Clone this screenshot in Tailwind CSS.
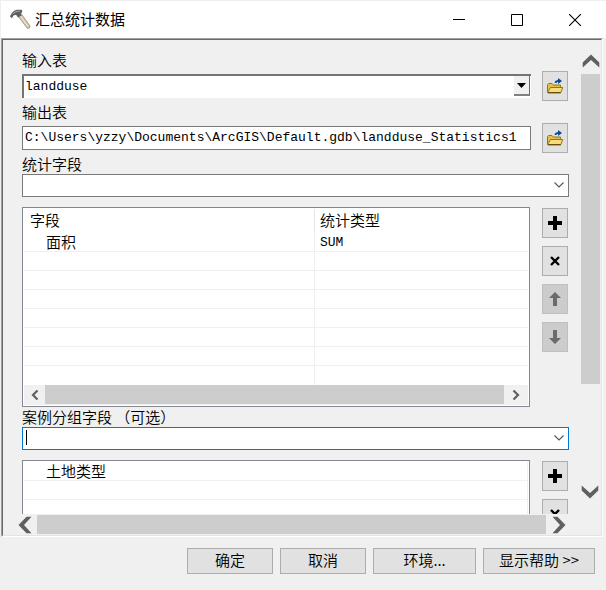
<!DOCTYPE html>
<html lang="zh-CN">
<head>
<meta charset="utf-8">
<meta name="viewport" content="width=device-width, initial-scale=1">
<title>汇总统计数据</title>
<script src="https://cdn.jsdelivr.net/npm/@tailwindcss/browser@4"></script>
</head>
<body class="h-screen bg-[#f0f0f0] text-black text-[15px] leading-4 font-[350] font-['Noto_Sans_CJK_SC',sans-serif]">
<svg class="hidden" aria-hidden="true">
  <defs>
    <symbol id="folder" viewBox="0 0 18 16">
      <path d="M1.500 14V6.500L2.500 5.500H6L7.500 7H14.500V9.500" fill="#e0bf4c" stroke="#94751a"/>
      <path d="M1.500 14.500L4.500 9.500H16.800L14.800 14.500Z" fill="#f7dc7c" stroke="#94751a" stroke-linejoin="round"/>
      <path d="M2 14.700H14.800" stroke="#6b4e08" stroke-width="1.4"/>
      <path d="M9.500 5C9.500 3.300 10.500 2.900 13 2.900" fill="none" stroke="#0b4a8c" stroke-width="1.8"/>
      <path d="M12 0L16 2.900L12 5.900Z" fill="#0b4a8c"/>
    </symbol>
    <symbol id="plus" viewBox="0 0 14 14"><path d="M5 0H9V5H14V9H9V14H5V9H0V5H5Z"/></symbol>
    <symbol id="cross" viewBox="0 0 10 10"><path d="M1 1L9 9M9 1L1 9" fill="none" stroke="#000" stroke-width="2.4"/></symbol>
    <symbol id="arrow" viewBox="0 0 12 14"><path d="M6 0L12 6H8V14H4V6H0Z" fill="#6b6b6b"/></symbol>
    <symbol id="chev" viewBox="0 0 18 14"><path d="M9 .5L17.300 8.500V13.500L9 6L.7 13.500V8.500Z" fill="#606060"/></symbol>
    <symbol id="drop" viewBox="0 0 10 6"><path d="M.5 .5L5 5L9.500 .5" fill="none" stroke="#555" stroke-width="1.1"/></symbol>
    <symbol id="thin" viewBox="0 0 8 10"><path d="M6.500 .5L2 5L6.500 9.500" fill="none" stroke="#606060" stroke-width="2.2"/></symbol>
  </defs>
</svg>
<div class="flex h-full flex-col border-l border-t border-[#efefef]">
  <header class="flex h-[37px] shrink-0 items-center bg-white pr-0.5 pl-2">
    <svg class="size-[22px]" viewBox="0 0 22 22" aria-hidden="true">
      <path d="M8.500 6.500L12 4.500L21 17Q21.300 19.500 18.500 19.500Z" fill="#d3c6ae" stroke="#8d8069" stroke-width=".7"/>
      <path d="M11.500 7L19 17.500" stroke="#f3ecdc" stroke-width="1"/>
      <path d="M1 7.500Q3 2 8 .8L12.800 .7L13.300 3L11.800 4.500L12.500 6.500L9 8.500L7 5.800L4.500 6.500L3 9.300Z" fill="#5f5f5f"/>
      <path d="M3.500 5Q6 2 11 2" fill="none" stroke="#a8a8a8"/>
    </svg>
    <h1 class="ml-1 flex-1 pb-0.5 font-normal">汇总统计数据</h1>
    <button aria-label="最小化" class="flex h-full w-[58px] items-center justify-center"><svg class="size-3" viewBox="0 0 12 12"><path d="M0 5.500H12" stroke="#000"/></svg></button>
    <button aria-label="最大化" class="flex h-full w-[58px] items-center justify-center"><svg class="size-3" viewBox="0 0 12 12"><path d="M.5 .5H11.500V11.500H.5Z" fill="none" stroke="#000"/></svg></button>
    <button aria-label="关闭" class="flex h-full w-[58px] items-center justify-center"><svg class="size-3" viewBox="0 0 12 12"><path d="M0 0L12 12M12 0L0 12" stroke="#000" stroke-width="1.1"/></svg></button>
  </header>

  <main class="mr-[3px] flex min-h-0 flex-1 border border-t-[#a0a0a0] border-r-white border-b-white border-l-[#a0a0a0]">
    <div class="flex min-w-0 flex-1 border border-t-[#696969] border-r-[#e3e3e3] border-b-[#e3e3e3] border-l-[#696969]">
      <div class="flex min-w-0 flex-1 flex-col">
        <form class="min-h-0 flex-1 overflow-hidden pt-3 pr-3 pl-[19px]">
          <label for="in-table" class="block">输入表</label>
          <div class="mt-1.5 flex h-6 items-center gap-[11px] pr-px">
            <div class="relative h-6 min-w-0 flex-1 border-t-2 border-l-2 border-t-[#747474] border-l-[#747474] bg-white">
              <select id="in-table" class="h-full w-full appearance-none pb-0.5 pl-px text-[13px] font-normal outline-none font-['Liberation_Mono','Noto_Sans_CJK_SC',monospace]"><option>landduse</option></select>
              <span class="pointer-events-none absolute top-0 right-px flex h-5 w-4 items-center justify-center border-r border-b-2 border-r-[#696969] border-b-[#808080] bg-[#f0f0f0]"><svg class="h-[5px] w-[9px]" viewBox="0 0 9 5"><path d="M0 0H9L4.500 5Z"/></svg></span>
            </div>
            <button type="button" aria-label="浏览输入表" class="flex h-[30px] w-[26px] shrink-0 items-center justify-center border border-[#adadad] bg-[#e1e1e1]"><svg class="h-4 w-[18px]"><use href="#folder"/></svg></button>
          </div>
          <label for="out-table" class="mt-1.5 block">输出表</label>
          <div class="mt-1.5 flex h-6 items-center gap-[11px] pr-px">
            <input id="out-table" value="C:\Users\yzzy\Documents\ArcGIS\Default.gdb\landduse_Statistics1" class="h-6 min-w-0 flex-1 border border-[#7a7a7a] bg-white pb-px pl-0.5 text-[13px] font-normal outline-none font-['Liberation_Mono','Noto_Sans_CJK_SC',monospace]">
            <button type="button" aria-label="浏览输出表" class="flex h-[30px] w-[26px] shrink-0 items-center justify-center border border-[#adadad] bg-[#e1e1e1]"><svg class="h-4 w-[18px]"><use href="#folder"/></svg></button>
          </div>
          <label for="stat-field" class="mt-1.5 block">统计字段</label>
          <div class="relative mt-0.5 h-[23px]">
            <select id="stat-field" class="h-full w-full appearance-none border border-[#7a7a7a] bg-white outline-none"><option></option></select>
            <svg class="pointer-events-none absolute top-2 right-[5px] h-[6px] w-[10px]"><use href="#drop"/></svg>
          </div>
          <div class="mt-2.5 flex gap-3 pr-px">
            <div class="min-w-0 flex-1 border border-[#828790] bg-white p-px">
              <table class="w-full table-fixed border-separate border-spacing-0">
                <thead>
                  <tr class="h-6 text-left">
                    <th class="w-[291px] border-r border-[#e5e5e5] p-0 pb-0.5 pl-1.5 font-[350]">字段</th>
                    <th class="p-0 pb-0.5 pl-[5px] font-[350]">统计类型</th>
                  </tr>
                </thead>
                <tbody>
                  <tr class="h-[19px]"><td class="border-r border-b border-[#f0f0f0] p-0 pl-[22px]">面积</td><td class="border-b border-[#f0f0f0] p-0 pt-0.5 pl-[5px] text-[13px] font-normal font-['Liberation_Mono',monospace]">SUM</td></tr>
                  <tr class="h-[19px]"><td class="border-r border-b border-[#f0f0f0] p-0"></td><td class="border-b border-[#f0f0f0] p-0"></td></tr>
                  <tr class="h-[19px]"><td class="border-r border-b border-[#f0f0f0] p-0"></td><td class="border-b border-[#f0f0f0] p-0"></td></tr>
                  <tr class="h-[19px]"><td class="border-r border-b border-[#f0f0f0] p-0"></td><td class="border-b border-[#f0f0f0] p-0"></td></tr>
                  <tr class="h-[19px]"><td class="border-r border-b border-[#f0f0f0] p-0"></td><td class="border-b border-[#f0f0f0] p-0"></td></tr>
                  <tr class="h-[19px]"><td class="border-r border-b border-[#f0f0f0] p-0"></td><td class="border-b border-[#f0f0f0] p-0"></td></tr>
                  <tr class="h-[19px]"><td class="border-r border-b border-[#f0f0f0] p-0"></td><td class="border-b border-[#f0f0f0] p-0"></td></tr>
                  <tr class="h-[19px]"><td class="border-r border-[#f0f0f0] p-0"></td><td class="p-0"></td></tr>
                </tbody>
              </table>
              <div class="flex h-5 bg-[#f0f0f0] pb-px">
                <button type="button" aria-label="向左滚动" class="flex w-[21px] items-center justify-center"><svg class="h-2.5 w-2"><use href="#thin"/></svg></button>
                <div class="flex-1 bg-[#cdcdcd]"></div>
                <button type="button" aria-label="向右滚动" class="flex w-6 items-center justify-center"><svg class="h-2.5 w-2 rotate-180"><use href="#thin"/></svg></button>
              </div>
            </div>
            <div class="flex shrink-0 flex-col gap-2 pt-px">
              <button type="button" aria-label="添加" class="flex h-[30px] w-[26px] items-center justify-center border border-[#adadad] bg-[#e1e1e1]"><svg class="size-3.5"><use href="#plus"/></svg></button>
              <button type="button" aria-label="移除" class="flex h-[30px] w-[26px] items-center justify-center border border-[#adadad] bg-[#e1e1e1]"><svg class="size-2.5"><use href="#cross"/></svg></button>
              <button type="button" disabled aria-label="上移" class="flex h-[30px] w-[26px] items-center justify-center border border-[#bfbfbf] bg-[#cccccc]"><svg class="h-3.5 w-3"><use href="#arrow"/></svg></button>
              <button type="button" disabled aria-label="下移" class="flex h-[30px] w-[26px] items-center justify-center border border-[#bfbfbf] bg-[#cccccc]"><svg class="h-3.5 w-3 rotate-180"><use href="#arrow"/></svg></button>
            </div>
          </div>
          <label for="case-field" class="mt-0.5 block">案例分组字段 （可选）</label>
          <div class="relative mt-0.5 h-[23px]">
            <select id="case-field" class="h-full w-full appearance-none border border-[#0078d7] bg-white outline-none"><option></option></select>
            <span class="pointer-events-none absolute top-[3px] left-1 h-[15px] w-px bg-black"></span>
            <svg class="pointer-events-none absolute top-2 right-[5px] h-[6px] w-[10px]"><use href="#drop"/></svg>
          </div>
          <div class="mt-2.5 flex gap-3 pr-px">
            <div class="min-w-0 flex-1 border border-[#828790] bg-white p-px">
              <table class="w-full table-fixed border-separate border-spacing-0">
                <tbody>
                  <tr class="h-[19px]"><td class="border-r border-b border-[#f0f0f0] p-0 pl-[22px]">土地类型</td></tr>
                  <tr class="h-[19px]"><td class="border-r border-b border-[#f0f0f0] p-0"></td></tr>
                  <tr class="h-[19px]"><td class="border-r border-b border-[#f0f0f0] p-0"></td></tr>
                </tbody>
              </table>
            </div>
            <div class="flex shrink-0 flex-col gap-2 pt-px">
              <button type="button" aria-label="添加" class="flex h-[30px] w-[26px] items-center justify-center border border-[#adadad] bg-[#e1e1e1]"><svg class="size-3.5"><use href="#plus"/></svg></button>
              <button type="button" aria-label="移除" class="flex h-[30px] w-[26px] items-center justify-center border border-[#adadad] bg-[#e1e1e1]"><svg class="size-2.5"><use href="#cross"/></svg></button>
            </div>
          </div>
        </form>
        <div class="flex h-[21px] shrink-0 py-px pr-2.5 pl-[9px]">
          <button type="button" aria-label="向左滚动" class="flex w-[25px] items-center justify-center"><svg class="h-3.5 w-[18px] -rotate-90"><use href="#chev"/></svg></button>
          <div class="flex-1 bg-[#cdcdcd]"></div>
          <button type="button" aria-label="向右滚动" class="flex w-[25px] items-center justify-center"><svg class="h-3.5 w-[18px] rotate-90"><use href="#chev"/></svg></button>
        </div>
      </div>
      <div class="flex w-5 shrink-0 flex-col pt-3 pr-px pb-9">
        <button type="button" aria-label="向上滚动" class="flex h-[22px] items-start justify-center pt-0.5"><svg class="h-3.5 w-[18px]"><use href="#chev"/></svg></button>
        <div class="h-[310px] bg-[#cdcdcd]"></div>
        <button type="button" aria-label="向下滚动" class="mt-auto"><svg class="h-3.5 w-[18px] rotate-180"><use href="#chev"/></svg></button>
      </div>
    </div>
  </main>

  <footer class="flex shrink-0 justify-end gap-[7px] pt-[11px] pr-[11px] pb-4">
    <button class="h-[26px] w-[86px] border border-[#adadad] bg-[#e1e1e1] pb-0.5">确定</button>
    <button class="h-[26px] w-[86px] border border-[#adadad] bg-[#e1e1e1] pb-0.5">取消</button>
    <button class="h-[26px] w-[103px] border border-[#adadad] bg-[#e1e1e1] pb-0.5">环境...</button>
    <button class="h-[26px] w-[112px] border border-[#adadad] bg-[#e1e1e1] pb-0.5">显示帮助 &gt;&gt;</button>
  </footer>
</div>
</body>
</html>
